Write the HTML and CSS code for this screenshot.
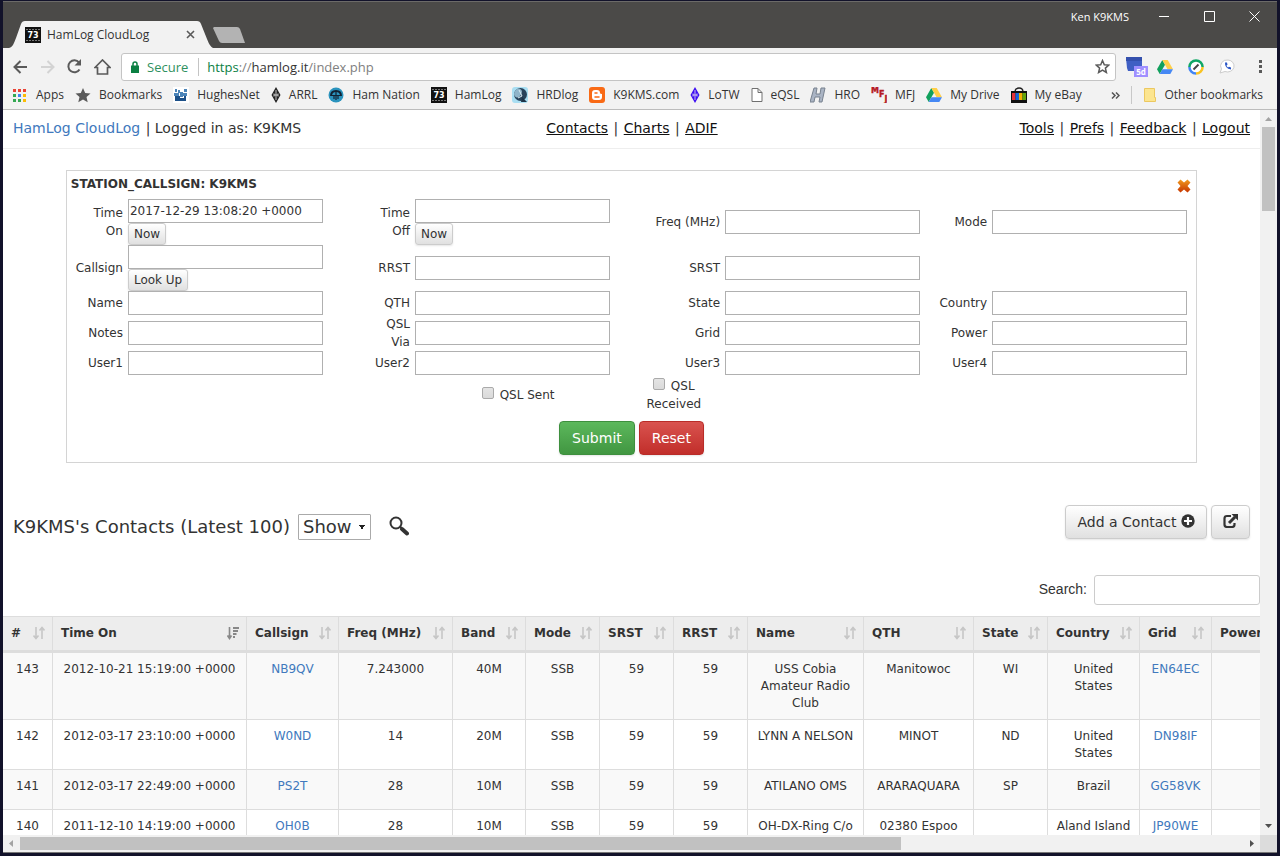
FILE: index.html
```html
<!DOCTYPE html>
<html lang="en">
<head>
    <meta charset="UTF-8">
    <meta name="viewport" content="width=device-width, initial-scale=1.0">
    <title>HamLog CloudLog</title>
    <link rel="stylesheet" href="styles.css">
</head>
<body>
    <!-- Shared icons -->
    <svg class="sprite" aria-hidden="true">
        <symbol id="sort" viewBox="0 0 12 14">
            <path d="M3 1v11M.5 9.500 3 12.500l2.500-3M9 13V2M6.500 4.500 9 1.500l2.500 3" fill="none" stroke="currentColor" stroke-width="1.600"/>
        </symbol>
        <symbol id="sort-desc" viewBox="0 0 12 14">
            <path d="M2.500 1v11M.5 9.500l2 3 2-3" fill="none" stroke="currentColor" stroke-width="1.600"/>
            <path d="M6 1h6v2H6zM6 4h5v2H6zM6 7h3.500v2H6zM6 10h2v2H6z" fill="currentColor"/>
        </symbol>
        <symbol id="badge73" viewBox="0 0 16 16">
            <path d="M0 0h16v16H0z" fill="#111"/>
            <path d="M1 2.500h14M1 13.500h14" stroke="#777" stroke-dasharray="2 1"/>
            <text x="8" y="11" text-anchor="middle" font-family="DejaVu Sans" font-size="8" font-weight="bold" fill="#fff">73</text>
        </symbol>
        <symbol id="drive" viewBox="0 0 16 14">
            <path d="M5.300 0 0 9.300 2.700 14 8 4.700z" fill="#11a05c"/>
            <path d="M5.300 0h5.400L16 9.300h-5.400z" fill="#ffcf48"/>
            <path d="M5.400 9.300H16L13.300 14H2.700z" fill="#4688f4"/>
        </symbol>
        <symbol id="diamond" viewBox="0 0 10 16">
            <path d="M5 0 9.500 8 5 16 .5 8z" fill="currentColor"/>
            <path d="M5 3v10M3 6.500v3M7 6.500v3M3 8h4" stroke="#eee" stroke-width=".8"/>
        </symbol>
    </svg>

    <div class="window">
        <div class="titlebar">
            <div class="tab">
                <svg class="tab-shape" viewBox="0 0 204 27" preserveAspectRatio="none"><path d="M0 27C4 26 5 22 7 17L12 3Q13 0 16 0h172q3 0 4 3l6 15q3 8 6 9z" fill="#f2f2f2"/></svg>
                <svg class="icon16"><use href="#badge73"/></svg>
                <span class="tab-title">HamLog CloudLog</span>
                <button class="plain" aria-label="Close tab"><svg width="9" height="9" viewBox="0 0 9 9"><path d="M1 1l7 7M8 1 1 8" stroke="#5a5a5a" stroke-width="1.600"/></svg></button>
            </div>
            <button class="plain new-tab" aria-label="New tab"><svg width="32" height="16" viewBox="0 0 32 16"><path d="M1 0h23q2 0 3 2l5 14H9q-2 0-3-2L0 1z" fill="#b3b3b3"/></svg></button>
            <div class="window-buttons">
                <span>Ken K9KMS</span>
                <button class="plain" aria-label="Minimize"><svg width="11" height="11"><path d="M0 5.500h10" stroke="#fff"/></svg></button>
                <button class="plain" aria-label="Maximize"><svg width="11" height="11"><path d="M.5.5h10v10H.5z" fill="none" stroke="#fff"/></svg></button>
                <button class="plain" aria-label="Close"><svg width="11" height="11"><path d="M.5.5l10 10M10.500.5l-10 10" stroke="#fff"/></svg></button>
            </div>
        </div>

        <div class="toolbar">
            <div class="nav-buttons">
                <button class="plain" aria-label="Back"><svg width="15" height="14" viewBox="0 0 15 14"><path d="M14 7H2M7.500 1 1.500 7l6 6" fill="none" stroke="#5a5a5a" stroke-width="2"/></svg></button>
                <button class="plain" aria-label="Forward"><svg width="15" height="14" viewBox="0 0 15 14"><path d="M1 7h12M7.500 1l6 6-6 6" fill="none" stroke="#d3d3d3" stroke-width="2"/></svg></button>
                <button class="plain" aria-label="Reload"><svg width="15" height="15" viewBox="0 0 15 15"><path d="M12.500 10.500A6 6 0 1 1 12 3.500" fill="none" stroke="#5a5a5a" stroke-width="2"/><path d="M14 0v6.500H7.500z" fill="#5a5a5a"/></svg></button>
                <button class="plain" aria-label="Home"><svg width="17" height="16" viewBox="0 0 17 16"><path d="M1 8.500 8.500 1 16 8.500h-2.500V15h-10V8.500z" fill="none" stroke="#5a5a5a" stroke-width="1.700"/></svg></button>
            </div>
            <div class="address">
                <svg width="8" height="12" viewBox="0 0 8 12"><path d="M2 5V3q0-2 2-2t2 2v2" fill="none" stroke="#0b8043" stroke-width="1.500"/><path d="M0 4.500h8V12H0z" fill="#0b8043"/></svg>
                <span class="secure">Secure</span>
                <span class="url"><span class="green">https</span>://<b>hamlog.it</b>/index.php</span>
                <button class="plain" aria-label="Bookmark this page"><svg width="15" height="15" viewBox="0 0 15 15"><path d="M7.500 1.500 9.300 5.700l4.500.4-3.400 3 1 4.400-3.900-2.400-3.900 2.400 1-4.400-3.400-3 4.500-.4z" fill="none" stroke="#5a5a5a" stroke-width="1.500"/></svg></button>
            </div>
            <div class="extensions">
                <svg width="22" height="22" viewBox="0 0 22 22"><path d="M0 2h16v13H2l-1-3z" fill="#3f5fc4"/><path d="M0 1h16v4H0z" fill="#3450ad"/><path d="M8 10h14v11H8z" fill="#9f8fff"/><text x="15" y="19" text-anchor="middle" font-family="Open Sans" font-size="8" font-weight="bold" fill="#fff">5d</text></svg>
                <svg width="16" height="14"><use href="#drive"/></svg>
                <svg width="16" height="16" viewBox="0 0 16 16"><circle cx="8" cy="8" r="6" fill="#fff"/><path d="M8 14.600A6.600 6.600 0 0 1 1.400 8" fill="none" stroke="#4285f4" stroke-width="2.500"/><path d="M1.400 8A6.600 6.600 0 0 1 14.600 8" fill="none" stroke="#0fa765" stroke-width="2.500"/><path d="M14.600 8A6.600 6.600 0 0 1 8 14.600" fill="none" stroke="#f9c322" stroke-width="2.500"/><path d="M5.500 10.500l5-5" stroke="#444" stroke-width="2"/></svg>
                <svg width="17" height="16" viewBox="0 0 17 16"><path d="M9 1a6.500 6 0 1 1-3 11.500L1 14l1.500-4A6.500 6 0 0 1 9 1z" fill="#fff" stroke="#ccc"/><path d="M6 3.500Q5.500 9.500 12 10.500V8.500l-2-.8-1 .8Q7.500 7.500 7.500 6.500l1-.8L8 3.500z" fill="#2a56c6"/></svg>
                <button class="plain" aria-label="Menu"><svg width="4" height="14"><path d="M0 0h3v3H0zM0 5h3v3H0zM0 10h3v3H0z" fill="#5a5a5a"/></svg></button>
            </div>
        </div>

        <nav class="bookmarks">
            <a href="#"><svg class="icon16" viewBox="0 0 16 16"><path d="M1 2h3v3H1zM6 2h3v3H6zM11 2h3v3h-3z" fill="#ea4335"/><path d="M1 7h3v3H1zM1 12h3v3H1zM6 12h3v3H6z" fill="#34a853"/><path d="M6 7h3v3H6z" fill="#4285f4"/><path d="M11 7h3v3h-3zM11 12h3v3h-3z" fill="#fbbc05"/></svg>Apps</a>
            <a href="#"><svg class="icon16" viewBox="0 0 16 16"><path d="M8 1l2.200 4.900 5.300.5-4 3.600 1.200 5.200L8 12.500l-4.700 2.700L4.500 10l-4-3.600 5.300-.5z" fill="#5a5a5a"/></svg>Bookmarks</a>
            <a href="#"><svg class="icon16" viewBox="0 0 16 16"><path d="M0 0h16v16H0z" fill="#fff"/><path d="M2 2h2v3H2zM5 3h2v3H5zM1 6h5v3H1zM7 5h3v5H7zM11 2h3v3h-3zM10 6h4v3h-4z" fill="#4b84b8"/><path d="M2 9h5v5H2zM7 11h6v3H7zM11 9h2v2h-2z" fill="#1c5088"/></svg>HughesNet</a>
            <a href="#" class="black"><svg class="icon10"><use href="#diamond"/></svg>ARRL</a>
            <a href="#"><svg class="icon16" viewBox="0 0 16 16"><circle cx="8" cy="8" r="7.500" fill="#2b93bd"/><path d="M3 9Q3 4 8 4t5 5" fill="none" stroke="#123" stroke-width="2"/><path d="M3 8.500h10M6 8v4M8 5v8M10 8v4" fill="none" stroke="#123" stroke-width="1.200"/></svg>Ham Nation</a>
            <a href="#"><svg class="icon16"><use href="#badge73"/></svg>HamLog</a>
            <a href="#"><svg class="icon16" viewBox="0 0 16 16"><rect width="16" height="16" rx="3" fill="#a9def2"/><ellipse cx="8.500" cy="7.500" rx="6.500" ry="6.500" fill="#27425a"/><ellipse cx="6" cy="6" rx="3.500" ry="4.500" fill="#8fb4c9" transform="rotate(30 6 6)"/><path d="M7 3l3 6-4 2" fill="none" stroke="#dceef5"/><path d="M10 10l5 5h-6z" fill="#1d3347"/></svg>HRDlog</a>
            <a href="#"><svg class="icon16" viewBox="0 0 16 16"><rect width="16" height="16" rx="3" fill="#f96a15"/><path d="M6 3h2q3 0 3 3 0 1 2 1v3q0 3-3 3H6q-3 0-3-3V6q0-3 3-3z" fill="#fff"/><path d="M6 6h2M6 10h4" stroke="#f96a15" stroke-width="1.500" stroke-linecap="round"/></svg>K9KMS.com</a>
            <a href="#" class="violet"><svg class="icon10"><use href="#diamond"/></svg>LoTW</a>
            <a href="#"><svg class="icon12" viewBox="0 0 12 16"><path d="M1 1.500h6l4 4v9H1zM7 1.500v4h4" fill="#fff" stroke="#707070"/></svg>eQSL</a>
            <a href="#"><svg class="icon16" viewBox="0 0 16 16"><path d="M4 1h3L6 7h4l1-6h4l-3 14H9l1-5H5l-1 5H0z" fill="#aab4c4" stroke="#78828f"/></svg>HRO</a>
            <a href="#"><svg class="icon16" viewBox="0 0 16 16"><text x="0" y="6 10 15" font-family="DejaVu Sans" font-size="8" font-weight="bold" fill="#b5191f" stroke="#b5191f" stroke-width=".4">MFJ</text></svg>MFJ</a>
            <a href="#"><svg class="icon16"><use href="#drive"/></svg>My Drive</a>
            <a href="#"><svg class="icon16" viewBox="0 0 16 16"><path d="M4 5q0-4 4-4t4 4" fill="none" stroke="#222" stroke-width="1.300"/><path d="M0 4h16v12H0z" fill="#111"/><path d="M1 6h3.500v7H1z" fill="#e53238"/><path d="M4.500 6H8v7H4.500z" fill="#1466d8"/><path d="M8 6h3.500v7H8z" fill="#f5af02"/><path d="M11.500 6H15v7h-3.500z" fill="#63a60d"/></svg>My eBay</a>
            <a href="#" class="more" aria-label="More bookmarks"><svg width="9" height="7"><path d="M1 .5l3 3-3 3M5 .5l3 3-3 3" fill="none" stroke="#555" stroke-width="1.500"/></svg></a>
            <a href="#" class="other"><svg class="icon12" viewBox="0 0 12 16"><path d="M.5 1.500h10v9h1v4H.5z" fill="#fce58f" stroke="#ecc860"/></svg>Other bookmarks</a>
        </nav>

        <div class="viewport">
            <main class="page">
                <header class="page-header">
                    <div><a href="#" class="brand">HamLog CloudLog</a> | Logged in as: K9KMS</div>
                    <nav><a href="#">Contacts</a> | <a href="#">Charts</a> | <a href="#">ADIF</a></nav>
                    <nav class="right"><a href="#">Tools</a> | <a href="#">Prefs</a> | <a href="#">Feedback</a> | <a href="#">Logout</a></nav>
                </header>

                <form class="contact-form">
                    <div class="form-title">
                        <strong>STATION_CALLSIGN: K9KMS</strong>
                        <button type="button" class="plain" aria-label="Close form"><svg width="14" height="14" viewBox="0 0 14 14"><defs><linearGradient id="flame" x2="0" y2="1"><stop stop-color="#f19a1e"/><stop offset="1" stop-color="#c73600"/></linearGradient></defs><path d="M3.500.5 7 3.500 10.500.5l3 3L10.500 7l3 3.500-3 3L7 10.500l-3.500 3-3-3L3.500 7l-3-3.500z" fill="url(#flame)"/></svg></button>
                    </div>
                    <div class="fields">
                        <div class="field"><label for="timeOn">Time<br>On</label><div><input type="text" id="timeOn" value="2017-12-29 13:08:20 +0000"><button type="button" class="btn btn-mini">Now</button></div></div>
                        <div class="field"><label for="timeOff">Time<br>Off</label><div><input type="text" id="timeOff"><button type="button" class="btn btn-mini">Now</button></div></div>
                        <div class="field"><label for="freq">Freq (MHz)</label><input type="text" id="freq"></div>
                        <div class="field"><label for="mode">Mode</label><input type="text" id="mode"></div>

                        <div class="field"><label for="callsign">Callsign</label><div><input type="text" id="callsign"><button type="button" class="btn btn-mini">Look Up</button></div></div>
                        <div class="field"><label for="rrst">RRST</label><input type="text" id="rrst"></div>
                        <div class="field"><label for="srst">SRST</label><input type="text" id="srst"></div>
                        <div></div>

                        <div class="field short"><label for="name">Name</label><input type="text" id="name"></div>
                        <div class="field short"><label for="qth">QTH</label><input type="text" id="qth"></div>
                        <div class="field short"><label for="state">State</label><input type="text" id="state"></div>
                        <div class="field short"><label for="country">Country</label><input type="text" id="country"></div>

                        <div class="field short"><label for="notes">Notes</label><input type="text" id="notes"></div>
                        <div class="field short"><label for="via">QSL<br>Via</label><input type="text" id="via"></div>
                        <div class="field short"><label for="grid">Grid</label><input type="text" id="grid"></div>
                        <div class="field short"><label for="power">Power</label><input type="text" id="power"></div>

                        <div class="field short"><label for="user1">User1</label><input type="text" id="user1"></div>
                        <div class="field short"><label for="user2">User2</label><input type="text" id="user2"></div>
                        <div class="field short"><label for="user3">User3</label><input type="text" id="user3"></div>
                        <div class="field short"><label for="user4">User4</label><input type="text" id="user4"></div>
                    </div>
                    <div class="checks">
                        <label><input type="checkbox"> QSL Sent</label>
                        <label><input type="checkbox"> QSL<br>Received</label>
                    </div>
                    <div class="form-actions">
                        <button type="submit" class="btn btn-success">Submit</button>
                        <button type="reset" class="btn btn-danger">Reset</button>
                    </div>
                </form>

                <div class="list-header">
                    <h2>K9KMS's Contacts (Latest 100)</h2>
                    <select aria-label="Show"><option>Show</option></select>
                    <button class="plain" aria-label="Search contacts"><svg width="20" height="20" viewBox="0 0 20 20"><circle cx="7" cy="7" r="5.500" fill="none" stroke="#333" stroke-width="2"/><path d="M11 11l2 1" stroke="#333" stroke-width="2"/><path d="M13 13l5 4.500" stroke="#333" stroke-width="4" stroke-linecap="round"/></svg></button>
                    <div class="list-actions">
                        <button class="btn">Add a Contact <svg width="14" height="14" viewBox="0 0 14 14"><circle cx="7" cy="7" r="6.700" fill="#333"/><path d="M7 3v8M3 7h8" stroke="#fff" stroke-width="2.200"/></svg></button>
                        <button class="btn" aria-label="Open in new window"><svg width="15" height="14" viewBox="0 0 15 14"><path d="M8 2H4Q1.500 2 1.500 4.500v6Q1.500 13 4 13h5q2.500 0 2.500-2.500V9" fill="none" stroke="#333" stroke-width="2.200"/><path d="M6 9l6-6" stroke="#333" stroke-width="3"/><path d="M8.500 0H15v6.500z" fill="#333"/></svg></button>
                    </div>
                </div>

                <div class="search-row">
                    <label for="search">Search:</label>
                    <input type="text" id="search">
                </div>

                <table>
                    <colgroup>
                        <col class="c-num"><col class="c-time"><col class="c-call"><col class="c-freq"><col class="c-band"><col class="c-small"><col class="c-small"><col class="c-small"><col class="c-name"><col class="c-qth"><col class="c-small"><col class="c-call"><col class="c-grid"><col class="c-power">
                    </colgroup>
                    <thead>
                        <tr>
                            <th>#<svg><use href="#sort"/></svg></th>
                            <th>Time On<svg class="active"><use href="#sort-desc"/></svg></th>
                            <th>Callsign<svg><use href="#sort"/></svg></th>
                            <th>Freq (MHz)<svg><use href="#sort"/></svg></th>
                            <th>Band<svg><use href="#sort"/></svg></th>
                            <th>Mode<svg><use href="#sort"/></svg></th>
                            <th>SRST<svg><use href="#sort"/></svg></th>
                            <th>RRST<svg><use href="#sort"/></svg></th>
                            <th>Name<svg><use href="#sort"/></svg></th>
                            <th>QTH<svg><use href="#sort"/></svg></th>
                            <th>State<svg><use href="#sort"/></svg></th>
                            <th>Country<svg><use href="#sort"/></svg></th>
                            <th>Grid<svg><use href="#sort"/></svg></th>
                            <th>Power</th>
                        </tr>
                    </thead>
                    <tbody>
                        <tr><td>143</td><td>2012-10-21 15:19:00 +0000</td><td><a href="#">NB9QV</a></td><td>7.243000</td><td>40M</td><td>SSB</td><td>59</td><td>59</td><td>USS Cobia<br>Amateur Radio<br>Club</td><td>Manitowoc</td><td>WI</td><td>United<br>States</td><td><a href="#">EN64EC</a></td><td></td></tr>
                        <tr><td>142</td><td>2012-03-17 23:10:00 +0000</td><td><a href="#">W0ND</a></td><td>14</td><td>20M</td><td>SSB</td><td>59</td><td>59</td><td>LYNN A NELSON</td><td>MINOT</td><td>ND</td><td>United<br>States</td><td><a href="#">DN98IF</a></td><td></td></tr>
                        <tr><td>141</td><td>2012-03-17 22:49:00 +0000</td><td><a href="#">PS2T</a></td><td>28</td><td>10M</td><td>SSB</td><td>59</td><td>59</td><td>ATILANO OMS</td><td>ARARAQUARA</td><td>SP</td><td>Brazil</td><td><a href="#">GG58VK</a></td><td></td></tr>
                        <tr><td>140</td><td>2011-12-10 14:19:00 +0000</td><td><a href="#">OH0B</a></td><td>28</td><td>10M</td><td>SSB</td><td>59</td><td>59</td><td>OH-DX-Ring C/o</td><td>02380 Espoo</td><td></td><td>Aland Island</td><td><a href="#">JP90WE</a></td><td></td></tr>
                    </tbody>
                </table>
            </main>
            <div class="scroll-y">
                <svg width="7" height="4"><path d="M0 4h7L3.500 0z" fill="#a3a3a3"/></svg>
                <div class="thumb-y"></div>
                <svg width="7" height="4"><path d="M0 0h7L3.500 4z" fill="#505050"/></svg>
            </div>
        </div>
        <div class="scroll-x">
            <div class="track-x">
                <svg width="4" height="7"><path d="M4 0v7L0 3.500z" fill="#a3a3a3"/></svg>
                <div class="rail-x"><div class="thumb-x"></div></div>
                <svg width="4" height="7"><path d="M0 0v7l4-3.500z" fill="#505050"/></svg>
            </div>
            <div class="corner"></div>
        </div>
    </div>
</body>
</html>
```
FILE: styles.css
```css
:root {
    --text-color: #333;
    --link-color: #4179bd;
    --chrome-bg: #f2f2f2;
    --chrome-dark: #4b4a48;
    --border-color: #ddd;
    --field-border: #b0b0b0;
}

* {
    margin: 0;
    padding: 0;
    box-sizing: border-box;
}

body {
    height: 100vh;
    padding: 1px 3px 3px;
    background-color: #12122a;
    color: var(--text-color);
    font-family: "DejaVu Sans", Verdana, sans-serif;
    font-size: 12px;
    line-height: 18px;
    overflow: hidden;
}

button, input, select {
    font: inherit;
    color: inherit;
}

svg {
    flex-shrink: 0;
}

a {
    color: var(--link-color);
    text-decoration: none;
}

.sprite {
    display: none;
}

.plain {
    display: flex;
    background: none;
    border: none;
}

.window {
    height: 100%;
    display: flex;
    flex-direction: column;
    background-color: white;
}

/* Title bar */
.titlebar, .toolbar, .bookmarks {
    flex-shrink: 0;
    display: flex;
    font-family: "Open Sans", sans-serif;
}

.titlebar {
    height: 47px;
    padding-left: 6px;
    align-items: flex-end;
    background-color: var(--chrome-dark);
    border-top: 1px solid #6b6a68;
}

.tab {
    position: relative;
    width: 204px;
    height: 27px;
    padding: 0 18px 0 16px;
    display: flex;
    align-items: center;
    gap: 6px;
}

.tab > * {
    position: relative;
}

.tab .tab-shape {
    position: absolute;
    left: 0;
    top: 0;
    width: 100%;
    height: 100%;
}

.tab-title {
    flex: 1;
}

.new-tab {
    margin-bottom: 5px;
}

.window-buttons {
    margin-left: auto;
    align-self: flex-start;
    height: 29px;
    padding-right: 17px;
    display: flex;
    align-items: center;
    gap: 34px;
    color: white;
    font-size: 11px;
}

.window-buttons span {
    margin-right: -4px;
}

.icon16 {
    width: 16px;
    height: 16px;
}

.icon12 {
    width: 12px;
    height: 16px;
}

.icon10 {
    width: 10px;
    height: 16px;
}

/* Toolbar */
.toolbar {
    height: 33px;
    padding: 4px 18px 0 10px;
    align-items: center;
    gap: 10px;
    background-color: var(--chrome-bg);
}

.nav-buttons {
    display: flex;
    align-items: center;
    gap: 12px;
}

.address {
    flex: 1;
    height: 28px;
    padding: 0 5px 0 9px;
    display: flex;
    align-items: center;
    gap: 8px;
    background-color: white;
    border: 1px solid #c4c4c4;
    border-radius: 3px;
    font-size: 13px;
}

.secure {
    padding-right: 10px;
    border-right: 1px solid #c4c4c4;
    color: #2f9160;
}

.url {
    flex: 1;
    color: #808080;
}

.url b {
    color: #333;
    font-weight: normal;
}

.green {
    color: #0b8043;
}

.extensions {
    display: flex;
    align-items: center;
    gap: 15px;
}

.extensions svg:first-child {
    margin-right: -6px;
}

.extensions button {
    margin-left: 8px;
}

.bookmarks {
    height: 29px;
    padding: 0 14px 0 9px;
    align-items: center;
    gap: 11px;
    background-color: var(--chrome-bg);
    border-bottom: 1px solid #bcbcbc;
    white-space: nowrap;
}

.bookmarks a {
    display: flex;
    align-items: center;
    gap: 8px;
    color: var(--text-color);
}

.bookmarks .black svg {
    color: #222;
}

.bookmarks .violet svg {
    color: #3d0df2;
}

.bookmarks .more {
    margin-left: auto;
}

.bookmarks .other {
    padding-left: 12px;
    border-left: 1px solid #c8c8c8;
}

/* Page */
.viewport {
    flex: 1;
    min-height: 0;
    display: flex;
}

.page {
    flex: 1;
    min-width: 0;
    overflow: hidden;
}

.page-header {
    height: 39px;
    padding: 0 10px 2px;
    display: grid;
    grid-template-columns: 1fr auto 1fr;
    align-items: center;
    border-bottom: 1px solid #eee;
    font-size: 14px;
}

.page-header a {
    margin-right: 1px;
}

.page-header nav a {
    margin-left: 1px;
    color: #111;
    text-decoration: underline;
}

.page-header nav a:last-child {
    margin-right: 0;
}

.right {
    text-align: right;
}

/* Contact form */
.contact-form {
    margin: 21px 5% 0;
    padding: 4px 9px 7px 0;
    border: 1px solid #d4d4d4;
}

.form-title {
    padding-left: 4px;
    margin: 0 -4px 6px 0;
    display: flex;
    justify-content: space-between;
    align-items: center;
}

.form-title button {
    margin-top: 4px;
}

.fields {
    display: grid;
    grid-template-columns: 256fr 287fr 310fr 267fr;
}

.field {
    min-height: 46px;
    display: flex;
    justify-content: flex-end;
    align-items: center;
    gap: 5px;
}

.field.short {
    height: 24px;
    min-height: 24px;
    margin-bottom: 6px;
}

.field label {
    text-align: right;
}

.field input {
    display: block;
    width: 195px;
    height: 24px;
    padding: 0 1px;
    border: 1px solid var(--field-border);
}

.checks {
    height: 36px;
    margin-top: -4px;
    padding-right: 71px;
    display: flex;
    justify-content: center;
    align-items: center;
    gap: 92px;
    text-align: center;
}

.checks input {
    appearance: none;
    width: 12px;
    height: 12px;
    margin-right: 2px;
    border: 1px solid #aaa;
    border-radius: 2px;
    background: linear-gradient(#e4e4e4, #dadada);
}

.btn {
    height: 34px;
    padding: 0 12px;
    border: 1px solid #ccc;
    border-radius: 4px;
    background: linear-gradient(#fff, #e0e0e0);
    box-shadow: 0 1px 2px rgba(0, 0, 0, 0.1);
    font-size: 14px;
}

.btn svg {
    vertical-align: -1px;
}

.btn-mini {
    display: block;
    height: 22px;
    padding: 0 5px;
    border-radius: 3px;
    font-size: 12px;
}

.btn-success {
    border-color: #3e8f3e;
    background: linear-gradient(#5cb85c, #419641);
    color: white;
}

.btn-danger {
    border-color: #b92c28;
    background: linear-gradient(#d9534f, #c12e2a);
    color: white;
}

.form-actions {
    margin: 8px -9px 0 0;
    display: flex;
    justify-content: center;
    gap: 4px;
}

/* Contacts list */
.list-header {
    margin-top: 41px;
    padding: 0 10px;
    display: flex;
    align-items: center;
}

.list-header h2 {
    margin-top: 10px;
    font-size: 18px;
    font-weight: normal;
}

.list-header select {
    appearance: none;
    width: 73px;
    height: 26px;
    margin: 10px 18px 0 8px;
    padding: 0 4px;
    border: 1px solid #aaa;
    border-radius: 1px;
    background: linear-gradient(to bottom right, #222 50%, transparent 50%) 63px 10px / 3px 5px no-repeat,
                linear-gradient(to bottom left, #222 50%, transparent 50%) 60px 10px / 3px 5px no-repeat;
    font-size: 18px;
}

.list-header > button {
    margin-top: 8px;
}

.list-actions {
    margin-left: auto;
    display: flex;
    gap: 4px;
}

.list-actions .btn {
    padding: 0 11px;
}

.search-row {
    margin: 35px 0 11px;
    display: flex;
    justify-content: flex-end;
    align-items: center;
    gap: 7px;
    font-family: "Liberation Sans", Arial, sans-serif;
    font-size: 14px;
}

.search-row label {
    margin-top: -2px;
}

.search-row input {
    width: 166px;
    height: 30px;
    padding: 0 8px;
    border: 1px solid #ccc;
    border-radius: 3px;
}

table {
    width: 1290px;
    margin-left: -1px;
    table-layout: fixed;
    border-collapse: collapse;
    line-height: 17px;
    white-space: nowrap;
}

.c-num { width: 50px; }
.c-time { width: 194px; }
.c-call { width: 92px; }
.c-freq { width: 114px; }
.c-band { width: 73px; }
.c-small { width: 74px; }
.c-name { width: 116px; }
.c-qth { width: 110px; }
.c-grid { width: 72px; }
.c-power { width: 81px; }

th, td {
    padding: 8px 0 7px;
    border: 1px solid var(--border-color);
    text-align: center;
    vertical-align: top;
}

th {
    padding: 8px 7px 8px 8px;
    background-color: #ededed;
    border-bottom: 3px solid var(--border-color);
    text-align: left;
}

th svg {
    float: right;
    width: 12px;
    height: 14px;
    margin-top: 1px;
    color: #c6c6c6;
}

th svg.active {
    color: #888;
}

td {
    height: 40px;
}

tbody tr:nth-child(odd) {
    background-color: #f9f9f9;
}

/* Scroll bars */
.scroll-y {
    width: 17px;
    padding: 7px 0;
    display: flex;
    flex-direction: column;
    align-items: center;
    background-color: #f1f1f1;
}

.thumb-y {
    width: 13px;
    height: 84px;
    margin: 6px 0 auto;
    background-color: #c1c1c1;
}

.scroll-x {
    height: 18px;
    flex-shrink: 0;
    display: flex;
    border-bottom: 1px solid #777;
}

.track-x {
    flex: 1;
    padding: 0 6px;
    display: flex;
    align-items: center;
    gap: 7px;
    background-color: #f1f1f1;
}

.rail-x {
    flex: 1;
}

.thumb-x {
    width: 72%;
    height: 13px;
    background-color: #c1c1c1;
}

.corner {
    width: 17px;
    background-color: #dcdcdc;
}
```
